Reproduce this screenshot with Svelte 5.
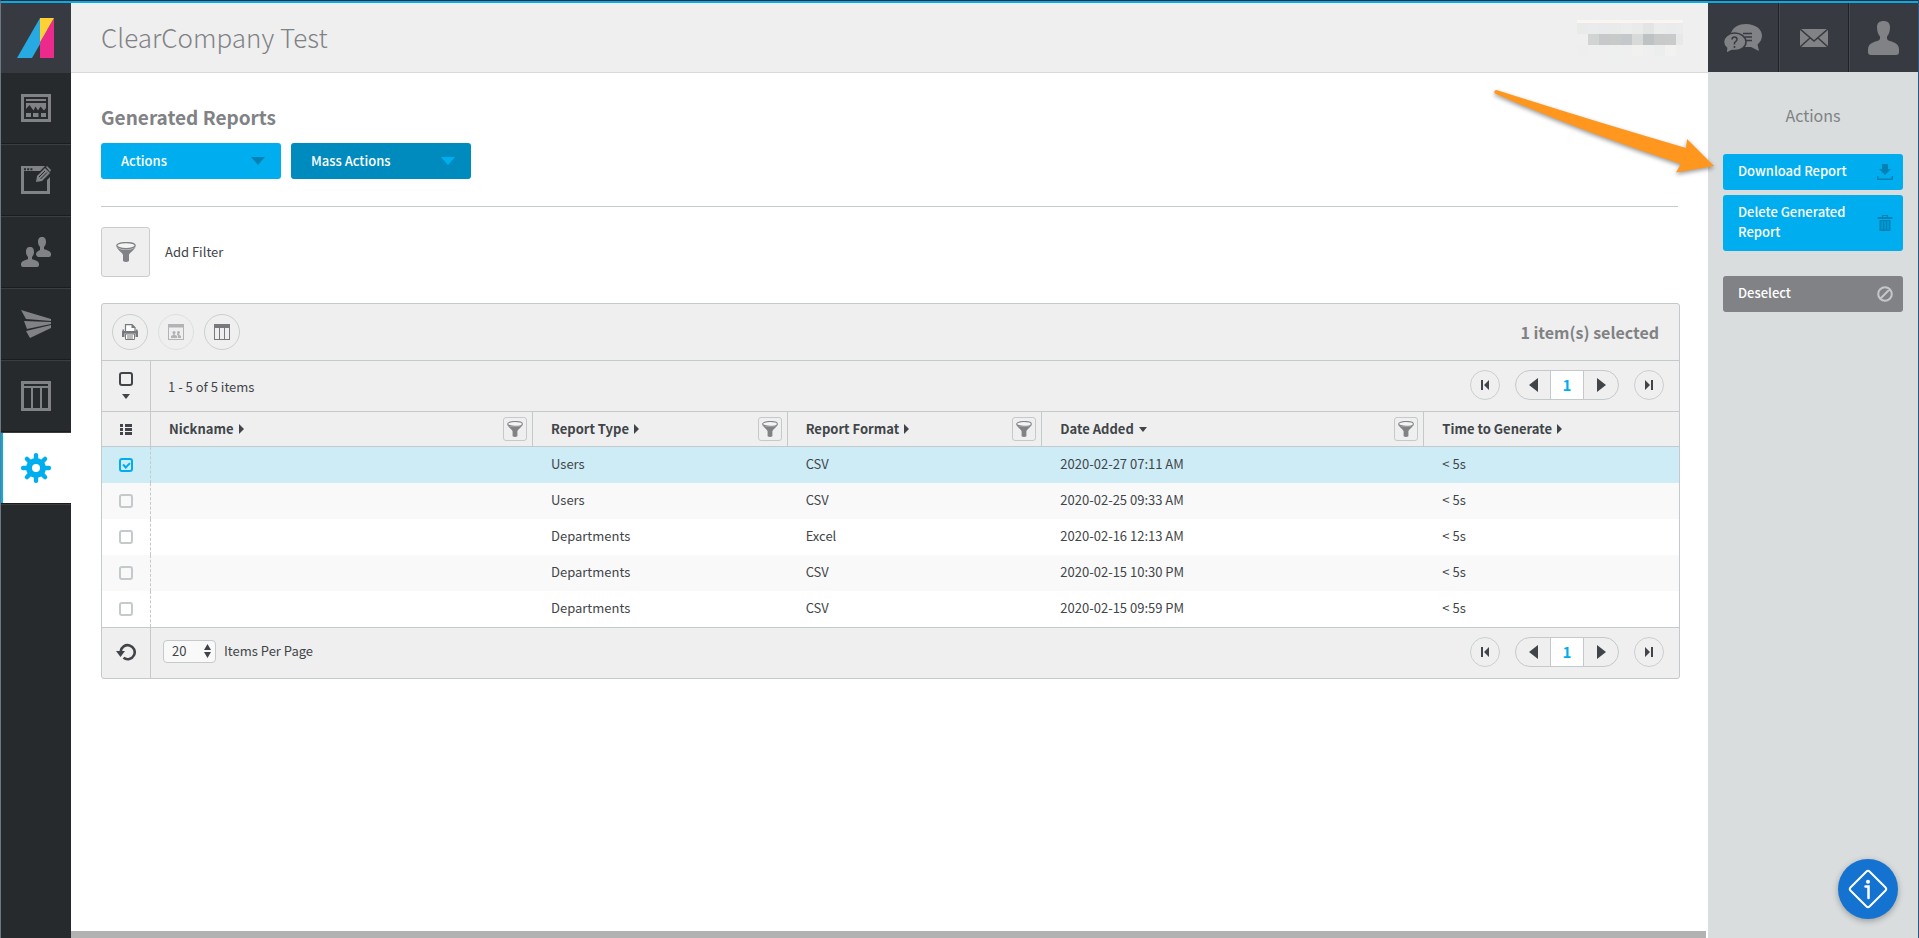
<script>
  const nav = ['dashboard', 'editor', 'people', 'send', 'columns', 'settings'];
  const columns = [
    { label: 'Nickname', filter: true },
    { label: 'Report Type', filter: true },
    { label: 'Report Format', filter: true },
    { label: 'Date Added', filter: true, sorted: true },
    { label: 'Time to Generate' }
  ];
  let rows = $state([
    { type: 'Users', format: 'CSV', date: '2020-02-27 07:11 AM', time: '< 5s', selected: true },
    { type: 'Users', format: 'CSV', date: '2020-02-25 09:33 AM', time: '< 5s', selected: false },
    { type: 'Departments', format: 'Excel', date: '2020-02-16 12:13 AM', time: '< 5s', selected: false },
    { type: 'Departments', format: 'CSV', date: '2020-02-15 10:30 PM', time: '< 5s', selected: false },
    { type: 'Departments', format: 'CSV', date: '2020-02-15 09:59 PM', time: '< 5s', selected: false }
  ]);
  let count = $derived(rows.filter((r) => r.selected).length);
  const deselect = () => rows.forEach((r) => (r.selected = false));
  const teeth = [0, 45, 90, 135, 180, 225, 270, 315];
  const mosaic = [
    ['#e9ebeb', '#e9ebec', '#e8eaeb', '#e9ebeb', '#ebecec', '#e9ebeb', '#e2e5e4', '#ebeded', '#e9ebec', '#ebecec'],
    ['#efefef', '#d2d3d3', '#c6c8c9', '#c8caca', '#c5c8ca', '#d8d9d9', '#bfc2c2', '#c8caca', '#c9cbcb', '#e7e8e8'],
    ['#eeeeee', '#efefef', '#efefef', '#eeefef', '#efefef', '#f1f1f0', '#efefef', '#eceeee', '#f2f2f1', '#efefef']
  ];
</script>

{#snippet funnel(size)}
  <svg width={size} height={size} viewBox="0 0 20 20" aria-hidden="true">
    <ellipse cx="10" cy="3.6" rx="9.2" ry="3" fill="#f4f4f4" stroke="#808285" stroke-width="1.3" />
    <path d="M.4 4.2C2 8 10 7.600 10 7.600S18 8 19.600 4.200C19.200 7.500 13 11 13 13v6q-3 2-6 0v-6C7 11 .8 7.500.4 4.200z" fill="#808285" />
  </svg>
{/snippet}

{#snippet pager()}
  <div class="pager">
    <button class="round" aria-label="First page">
      <svg width="10" height="12" viewBox="0 0 10 12"><path d="M1 1h2v10H1zM9 1v10L4 6z" /></svg>
    </button>
    <div class="pages">
      <button aria-label="Previous page"><svg width="9" height="14" viewBox="0 0 9 14"><path d="M9 0v14L0 7z" /></svg></button>
      <button class="current">1</button>
      <button aria-label="Next page"><svg width="9" height="14" viewBox="0 0 9 14"><path d="M0 0v14l9-7z" /></svg></button>
    </div>
    <button class="round" aria-label="Last page">
      <svg width="10" height="12" viewBox="0 0 10 12"><path d="M7 1h2v10H7zM1 1v10l5-5z" /></svg>
    </button>
  </div>
{/snippet}

{#snippet navIcon(name)}
  <svg width="30" height="30" viewBox="0 0 30 30" fill="currentColor" aria-hidden="true">
    {#if name === 'dashboard'}
      <path fill-rule="evenodd" d="M0 1h30v28H0zM3 4v22h24V4z" />
      <path d="M5 6h20v2H5zM5 10h20v5l-2 2.500-3.500-4-2.500 4-2.500-4-2 4-4-5.500L5 16zM5 20h5v4H5zM12 20h5.500v4H12zM20 20h5v4h-5z" />
    {:else if name === 'editor'}
      <path fill-rule="evenodd" d="M0 1h24l-5 5H3v20h23V15l3-3v17H0z" />
      <path d="M3 3.200h2v2H3zM6.200 3.200h2v2h-2zM9.400 3.200h2v2h-2z" fill="#262a2c" />
      <path d="M15 17l1-6 8-8 5 5-8 8zM25 2l1-1 4 4-1 2z" />
      <path d="M18 12l6-6M19.500 14l6.500-6.500" stroke="#262a2c" stroke-width="1" />
    {:else if name === 'people'}
      <path d="M21 0c3 0 4 2 4 5 0 2-1 4-2 5v2c2 1 7 2 7 5v1q0 2-2 2H17q-2-1-2-3c0-2 2-3 4-4v-3c-1-1-2-3-2-5 0-3 1-5 4-5z" />
      <path d="M9 10c3 0 4 2 4 5 0 2-1 4-2 5v2c2 1 7 2 7 5v1q0 2-2 2H2q-2 0-2-2v-1c0-3 5-4 7-5v-2c-1-1-2-3-2-5 0-3 1-5 4-5z" />
    {:else if name === 'send'}
      <path d="M0 1l30 9v2L5 10zM3 12l27 1v2L6 20zM5 22l25-6v3L9 29z" />
    {:else if name === 'columns'}
      <path fill-rule="evenodd" d="M0 0h30v30H0zM3 3v2h24V3zM3 7v20h7V7zM12 7v20h7V7zM21 7v20h6V7z" />
    {:else}
      {#each teeth as angle}
        <rect x="12.800" y="0" width="4.400" height="8" rx="2" transform="rotate({angle} 15 15)" />
      {/each}
      <path fill-rule="evenodd" d="M15 5a10 10 0 100 20 10 10 0 000-20zm0 6a4 4 0 110 8 4 4 0 010-8z" />
    {/if}
  </svg>
{/snippet}

<div class="app">
  <nav aria-label="Main">
    <a class="logo" href="#home" aria-label="Home">
      <svg width="38" height="42" viewBox="0 0 38 42">
        <path d="M23 1L0 41h15L30 15V1z" fill="#27aae1" />
        <path d="M37 1v40H23V25z" fill="#eb2a8c" />
        <path d="M23 1h14L23 25z" fill="#ffd134" />
      </svg>
    </a>
    {#each nav as item}
      <a href="#{item}" class="item" class:active={item === 'settings'} aria-label={item}>{@render navIcon(item)}</a>
    {/each}
  </nav>

  <div class="center">
    <header>
      <span class="company">ClearCompany Test</span>
      <div class="account" aria-hidden="true">
        {#each mosaic as line}
          <div class="mosaic-row">
            {#each line as color}<span style="background:{color}"></span>{/each}
          </div>
        {/each}
      </div>
    </header>

    <main>
      <h1>Generated Reports</h1>
      <div class="menus">
        <button class="menu">Actions <span class="caret"></span></button>
        <button class="menu mass">Mass Actions <span class="caret"></span></button>
      </div>
      <hr />
      <button class="add-filter"><span class="filter-box">{@render funnel(20)}</span>Add Filter</button>

      <section class="grid">
        <div class="toolbar">
          <button class="tool" aria-label="Print">
            <svg width="16" height="16" viewBox="0 0 16 16">
              <path d="M3.500 7V.6h6.500l3 3V7" fill="#fff" stroke="#77797c" stroke-width="1.200" />
              <path d="M9.500 0v4h4zM0 7h16v6h-2.500V9.500h-11V13H0zM14 7V5.500h1.500V7zM.5 7V5.500H2V7z" fill="#77797c" />
              <path d="M3.500 10h9v5.500h-9zM5 12h6M5 14h6" fill="#fff" stroke="#77797c" />
            </svg>
          </button>
          <button class="tool faded" aria-label="Assign" disabled>
            <svg width="16" height="16" viewBox="0 0 16 16" fill="#77797c">
              <path fill-rule="evenodd" d="M0 0h16v16H0zM1 3.500V15h14V3.500z" />
              <circle cx="6" cy="8.500" r="1.600" /><circle cx="10.500" cy="8.500" r="1.400" />
              <path d="M5.300 9h1.400v1.800l2.300 1.200v2H3v-2l2.300-1.200zM9.800 9h1.400v1.800l1.800 1.200v2h-3.200v-2.500l-1-.7z" />
            </svg>
          </button>
          <button class="tool" aria-label="Columns">
            <svg width="16" height="16" viewBox="0 0 16 16" fill="#77797c">
              <path fill-rule="evenodd" d="M0 0h16v16H0zM1 4v11h4V4zM6 4v11h4V4zM11 4v11h4V4z" /><path d="M0 0h16v3H0z" />
            </svg>
          </button>
          <strong>{count} item(s) selected</strong>
        </div>

        <div class="bar">
          <div class="first">
            <input type="checkbox" class="all" aria-label="Select all" />
            <span class="mini-caret"></span>
          </div>
          <span class="range">1 - 5 of 5 items</span>
          {@render pager()}
        </div>

        <table>
          <thead>
            <tr>
              <th class="lead">
                <svg width="12" height="11" viewBox="0 0 12 11" fill="#414549"><path d="M0 0h3v3H0zM5 0h7v3H5zM0 4h3v3H0zM5 4h7v3H5zM0 8h3v3H0zM5 8h7v3H5z" /></svg>
              </th>
              {#each columns as column}
                <th>
                  <button class="sort">{column.label}<span class="marker" class:down={column.sorted}></span></button>
                  {#if column.filter}
                    <button class="filter" aria-label="Filter {column.label}">{@render funnel(16)}</button>
                  {/if}
                </th>
              {/each}
            </tr>
          </thead>
          <tbody>
            {#each rows as row, i}
              <tr class:selected={row.selected}>
                <td class="lead"><input type="checkbox" bind:checked={row.selected} aria-label="Select row {i + 1}" /></td>
                <td></td>
                <td>{row.type}</td>
                <td>{row.format}</td>
                <td>{row.date}</td>
                <td>{row.time}</td>
              </tr>
            {/each}
          </tbody>
        </table>

        <div class="bar footer">
          <button class="first" aria-label="Refresh">
            <svg width="20" height="20" viewBox="0 0 20 20">
              <path d="M4.700 9.500a7 7 0 112.800 6.300" fill="none" stroke="#414549" stroke-width="2.600" />
              <path d="M0 9h9l-4.500 6z" fill="#414549" />
            </svg>
          </button>
          <div class="per-page">
            <span class="select">
              <select id="per-page"><option>20</option><option>50</option><option>100</option></select>
              <svg width="7" height="14" viewBox="0 0 7 14" fill="#414549" aria-hidden="true"><path d="M0 6l3.500-6L7 6zM0 8h7l-3.500 6z" /></svg>
            </span>
            <label for="per-page">Items Per Page</label>
          </div>
          {@render pager()}
        </div>
      </section>
    </main>
    <div class="scrollbar"></div>
  </div>

  <aside>
    <div class="quick">
      <button aria-label="Help">
        <svg width="40" height="30" viewBox="0 0 40 30">
          <path d="M23 1c9 0 16 5 16 11.500 0 4-2 7-4.500 9L36 28l-8-4H17L8 10C10 4 16 1 23 1z" fill="#808285" />
          <path d="M20 10.500h9M22 14h7M23 17.500h6" stroke="#373a40" stroke-width="1.500" />
          <path d="M11.500 10C18 10 23 14 23 19s-5 8.500-11 8.500l-3 0-6 3 .6-5.500C1.500 23.500.5 21 .5 19c0-5 5-9 11-9z" fill="#808285" stroke="#373a40" stroke-width="1.500" />
          <path d="M9 16.500q0-2.500 2.500-2.500t2.500 2.300q0 1.500-1.500 2.300T11.500 21.500M11.500 23v2" fill="none" stroke="#373a40" stroke-width="1.500" />
        </svg>
      </button>
      <button aria-label="Messages">
        <svg width="28" height="18" viewBox="0 0 28 18">
          <path d="M0 0h28v18H0z" fill="#808285" /><path d="M0 0l14 12L28 0M0 18l10-9M28 18l-10-9" fill="none" stroke="#373a40" stroke-width="1.500" />
        </svg>
      </button>
      <button aria-label="Profile">
        <svg width="31" height="34" viewBox="0 0 31 34">
          <path d="M15.500 0c4 0 6.500 2 6.500 6 0 5-1.500 8-3 9.500V18c1 2 4 2 7 3.500 3.500 1.500 5 3.500 5 7V31q0 3-3 3H3q-3 0-3-3v-2.500c0-3.500 1.500-5.500 5-7C8 20 11 20 12 18v-2.500C10.500 14 9 11 9 6c0-4 2.500-6 6.500-6z" fill="#808285" />
        </svg>
      </button>
    </div>
    <h2>Actions</h2>
    <div class="actions">
      <button>Download Report
        <svg width="16" height="16" viewBox="0 0 16 16"><path d="M5 0h6v5h3l-6 6-6-6h3zM0 12h1.500v2.500h13V12H16v4H0z" fill="#0082b5" /></svg>
      </button>
      <button>Delete Generated Report
        <svg width="16" height="16" viewBox="0 0 16 16"><path fill-rule="evenodd" d="M5 0h6v2h4.500v2H.5V2H5zM6.200 1v1h3.600V1zM2.500 5h11v11h-11zM4.500 6v8.500h1V6zM7.500 6v8.500h1V6zM10.500 6v8.500h1V6z" fill="#0082b5" /></svg>
      </button>
      <button class="deselect" onclick={deselect}>Deselect
        <svg width="16" height="16" viewBox="0 0 16 16"><path d="M8 1.200a6.800 6.800 0 100 13.600A6.800 6.800 0 008 1.200zM3.300 12.700l9.400-9.400" fill="none" stroke="#c5c8c9" stroke-width="2" /></svg>
      </button>
    </div>
  </aside>

  <svg class="pointer" width="230" height="92" viewBox="0 0 230 92" aria-hidden="true">
    <path d="M5 4.500q1-1 3 0Q100 34 196 62L197 53 224 80 186 86.500 191 78Q90 45 6 8q-3-1-1-3.500z" fill="#ff961e" />
  </svg>
  <button class="info" aria-label="Information">
    <svg width="40" height="40" viewBox="0 0 40 40" fill="none" stroke="#fff" stroke-width="2">
      <rect x="6.500" y="6.500" width="27" height="27" rx="2.500" transform="rotate(45 20 20)" />
      <path d="M17.500 17.500h3V29" stroke-width="2.500" stroke-linecap="round" /><circle cx="20" cy="12.800" r="2" fill="#fff" stroke="none" />
    </svg>
  </button>
</div>

<style>
  :global(body) { margin: 0; }
  .app {
    box-sizing: border-box;
    position: relative;
    display: flex;
    min-height: 100vh;
    border-top: 1px solid #262a2c;
    border-left: 1px solid #6c7780;
    border-right: 1px solid #2c5684;
    background: #fff;
    color: #414549;
    font: 400 13px/20px "Noto Sans CJK JP", "Noto Sans CJK SC", sans-serif;
  }
  .app::before { content: ""; position: absolute; top: 0; left: 0; right: 0; height: 2px; background: #00aeef; }
  button { font: inherit; color: inherit; border: 0; padding: 0; background: none; cursor: pointer; }
  svg { display: block; flex: none; }

  nav { width: 70px; padding-top: 2px; background: #262a2c; color: #808285; flex: none; }
  .logo { display: grid; place-items: center; height: 70px; background: #373a40; }
  .item { display: grid; place-items: center; height: 70px; color: inherit; border-bottom: 1px solid #1a1d1f; box-shadow: 0 1px #3a3e41; margin-bottom: 1px; }
  .active { background: #fff; color: #00aeef; box-shadow: inset 2px 0 #00aeef, 0 1px #3a3e41; }

  .center { flex: 1; min-width: 0; display: flex; flex-direction: column; padding-top: 2px; }
  header { display: flex; align-items: center; justify-content: space-between; height: 69px; padding: 0 25px 0 30px; background: #efefef; border-bottom: 1px solid #dadada; }
  .company { padding-bottom: 2px; font-size: 26px; line-height: 36px; font-weight: 300; color: #808285; }
  .account { border-top: 3px solid #faf5f0; }
  .mosaic-row { display: flex; }
  .mosaic-row span { width: 11px; height: 11px; }
  .mosaic-row span:last-child { width: 7px; }

  main { flex: 1; padding: 29px 28px 0 30px; }
  h1 { margin: 0; font-size: 19px; line-height: 30px; font-weight: 700; color: #808285; }
  .menus { display: flex; gap: 10px; margin-top: 11px; }
  .menu { display: flex; align-items: center; justify-content: space-between; width: 180px; height: 36px; padding: 0 16px 1px 20px; border-radius: 3px; background: #00aeef; color: #fff; font-weight: 500; }
  .mass { background: #008bbf; }
  .caret { border: 7px solid transparent; border-top: 8px solid #0082b5; border-bottom: 0; }
  .mass .caret { border-top-color: #00aeef; }
  hr { margin: 27px 2px 20px 0; border: 0; border-top: 1px solid #c4c9ca; }
  .add-filter { display: flex; align-items: center; gap: 15px; }
  .filter-box { display: grid; place-items: center; width: 47px; height: 48px; border: 1px solid #c9cdce; border-radius: 3px; background: #efefef; }

  .grid { margin-top: 26px; border: 1px solid #c4c9cb; border-radius: 3px; background: #efefef; }
  .toolbar { display: flex; align-items: center; gap: 10px; height: 56px; padding: 0 20px 0 10px; border-bottom: 1px solid #c4c9cb; }
  .toolbar strong { margin-left: auto; padding-bottom: 1px; font-size: 16px; line-height: 24px; color: #808285; }
  .tool { display: grid; place-items: center; width: 36px; height: 36px; border: 1px solid #c9cfcf; border-radius: 50%; }
  .faded { opacity: .5; }
  .bar { display: flex; align-items: center; height: 50px; }
  .first { box-sizing: border-box; display: flex; flex-direction: column; align-items: center; justify-content: center; gap: 8px; width: 49px; height: 50px; padding-bottom: 2px; border-right: 1px solid #c4c9cb; flex: none; }
  .mini-caret { border: 4px solid transparent; border-top: 5px solid #414549; border-bottom: 0; }
  .range { padding: 2px 0 0 17px; }
  .pager { display: flex; gap: 15px; margin: 0 15px 2px auto; fill: #414549; }
  .pager .round { box-sizing: border-box; display: grid; place-items: center; width: 30px; height: 30px; border: 1px solid #c9cfcf; border-radius: 50%; }
  .pages { box-sizing: border-box; display: grid; grid-template-columns: 34px 34px 34px; height: 30px; border: 1px solid #c4c9cb; border-radius: 15px; overflow: hidden; }
  .pages button { display: grid; place-items: center; }
  .pages .current { background: #fff; color: #00aeef; font-size: 15px; font-weight: 700; border: solid #c4c9cb; border-width: 0 1px; }

  table, thead, tbody { display: block; }
  tr { display: grid; grid-template-columns: 49px 3fr 2fr 2fr 3fr 2fr; }
  thead { border: solid #c4c9cb; border-width: 1px 0; }
  th { box-sizing: border-box; display: flex; align-items: center; justify-content: space-between; height: 34px; padding: 0 5px 0 18px; border-right: 1px solid #c4c9cb; }
  th:last-child { border-right: 0; }
  .lead, th.lead { display: grid; place-items: center; place-content: center; padding: 0; }
  .sort { display: flex; align-items: center; gap: 5px; font-weight: 700; }
  .marker { border: 5px solid transparent; border-left: 5px solid #414549; border-right: 0; }
  .marker.down { border: 4px solid transparent; border-top: 5px solid #414549; border-bottom: 0; }
  .filter { box-sizing: border-box; display: grid; place-items: center; width: 24px; height: 24px; border: 1px solid #c4c9cb; border-radius: 3px; }
  td { box-sizing: border-box; height: 36px; padding: 7px 18px 9px; }
  td.lead { border-right: 1px dashed #c4c9cb; }
  tbody tr { background: #fff; }
  tbody tr:nth-child(even) { background: #f9f9f9; }
  tbody tr.selected { background: #ceecf6; }
  input { appearance: none; box-sizing: border-box; display: grid; place-items: center; width: 14px; height: 14px; margin: 0; border: 2px solid #c4c9cb; border-radius: 3px; }
  .all { border-color: #414549; }
  input:checked { border-color: #00aeef; }
  input:checked::after { content: ""; box-sizing: border-box; width: 7px; height: 5px; margin-bottom: 2px; border: solid #00aeef; border-width: 0 0 2px 2px; transform: rotate(-45deg); }
  .footer { border-top: 1px solid #c4c9cb; }
  .per-page { display: flex; align-items: center; gap: 8px; padding: 0 0 4px 12px; }
  .select { position: relative; display: flex; }
  .select svg { position: absolute; right: 5px; top: 4px; pointer-events: none; }
  select { appearance: none; box-sizing: border-box; width: 53px; height: 23px; padding: 0 16px 1px 8px; border: 1px solid #c4c9cb; border-radius: 4px; background: #f9f9f9; color: inherit; font: inherit; line-height: 20px; }
  label { padding-bottom: 1px; }
  .scrollbar { height: 7px; margin-right: 2px; background: #b2b2b2; }

  aside { width: 210px; padding-top: 2px; background: #d9dddd; flex: none; }
  .quick { display: grid; grid-template-columns: 1fr 1fr 1fr; height: 69px; background: #373a40; }
  .quick button { display: grid; place-items: center; }
  .quick button + button { border-left: 1px solid #202325; box-shadow: inset 1px 0 #454950; }
  h2 { margin: 28px 0 24px; text-align: center; font-size: 16px; line-height: 30px; font-weight: 400; color: #808285; }
  .actions { display: grid; gap: 5px; padding: 0 15px; }
  .actions button { display: flex; align-items: center; justify-content: space-between; gap: 10px; padding: 7px 10px 9px 15px; border-radius: 3px; background: #00aeef; color: #fff; font-weight: 500; text-align: left; }
  .actions svg { margin-top: 2px; }
  .actions .deselect { margin-top: 20px; background: #808285; }

  .pointer { position: absolute; top: 85px; right: 198px; filter: drop-shadow(0 2px 2px rgb(0 0 0 / .4)); }
  .info { position: absolute; right: 20px; bottom: 19px; display: grid; place-items: center; width: 60px; height: 60px; border-radius: 50%; background: #1473d0; box-shadow: 0 2px 6px rgb(0 0 0 / .3); }
</style>
